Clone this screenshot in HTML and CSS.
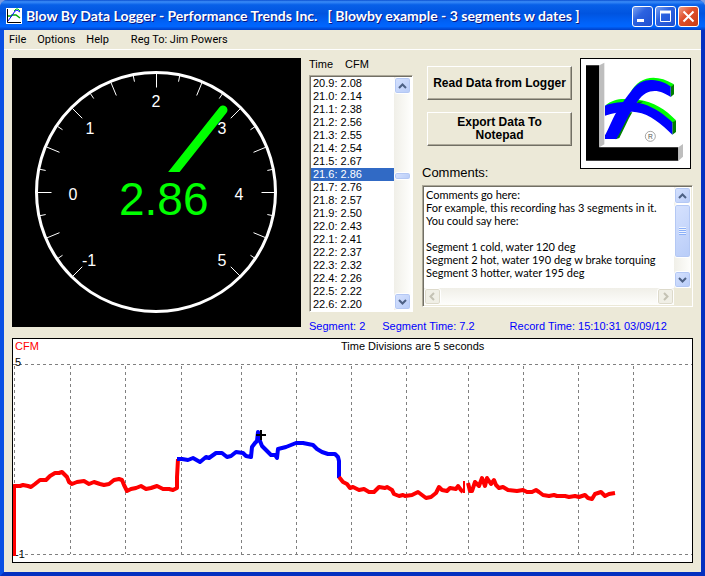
FILE: index.html
```
<!DOCTYPE html>
<html lang="en">
<head>
    <meta charset="UTF-8">
    <meta name="viewport" content="width=device-width, initial-scale=1.0">
    <title>Blow By Data Logger</title>
    <link rel="stylesheet" href="styles.css">
</head>
<body>

<div class="window">
    <header class="title-bar">
        <svg class="app-icon" viewBox="0 0 16 16" aria-hidden="true">
            <rect width="16" height="16" fill="#fff"/>
            <path d="M1.5 1V14.5H15" fill="none" stroke="#000" stroke-width="1"/>
            <path d="M2 8H5L6 7H10L14 10" fill="none" stroke="#0a0" stroke-width="1.5"/>
            <path d="M2 13L7 6L9 3L11 2L14 4" fill="none" stroke="#00f" stroke-width="1"/>
            <path d="M8 3L10 1H12L14 3" fill="none" stroke="#0c0" stroke-width="1"/>
        </svg>
        <h1>Blow By Data Logger - Performance Trends Inc. &nbsp; [ Blowby example - 3 segments w dates ]</h1>
        <div class="window-buttons">
            <button class="win-btn" aria-label="Minimize">
                <svg viewBox="0 0 19 19"><path d="M4 13.5h7" stroke="#fff" stroke-width="3"/></svg>
            </button>
            <button class="win-btn" aria-label="Maximize">
                <svg viewBox="0 0 19 19"><path d="M4.5 4.5h10v10h-10z" fill="none" stroke="#fff"/><path d="M4 5h11" stroke="#fff" stroke-width="3"/></svg>
            </button>
            <button class="win-btn close" aria-label="Close">
                <svg viewBox="0 0 19 19"><path d="M4.5 4.5l10 10M14.5 4.5l-10 10" stroke="#fff" stroke-width="2"/></svg>
            </button>
        </div>
    </header>

    <nav class="menu-bar">
        <a href="#">File</a>
        <a href="#">Options</a>
        <a href="#">Help</a>
        <a href="#" class="reg">Reg To: Jim Powers</a>
    </nav>

    <main>
        <div class="top">
            <!-- Gauge -->
            <svg class="gauge" viewBox="0 0 289 269">
                <rect width="289" height="269" fill="#000"/>
                <circle cx="144" cy="134" r="119.5" fill="none" stroke="#fff" stroke-width="3"/>
                <g id="ticks" stroke="#fff"></g>
                <line x1="146" y1="134" x2="211" y2="52" stroke="#0f0" stroke-width="9" stroke-linecap="round"/>
                <rect x="100" y="114" width="100" height="50" fill="#000"/>
                <text class="readout" x="107" y="157">2.86</text>
                <g class="gauge-labels">
                    <text x="77" y="208">-1</text>
                    <text x="61" y="142">0</text>
                    <text x="78" y="76">1</text>
                    <text x="144" y="49">2</text>
                    <text x="210" y="76">3</text>
                    <text x="227" y="142">4</text>
                    <text x="210" y="208">5</text>
                </g>
            </svg>

            <div class="side">
                <div class="panels">
                    <div class="data-list">
                        <label for="readings"><span>Time</span><span>CFM</span></label>
                        <div class="list-box">
                            <select id="readings" size="18">
                                <option>20.9: 2.08</option>
                                <option>21.0: 2.14</option>
                                <option>21.1: 2.38</option>
                                <option>21.2: 2.56</option>
                                <option>21.3: 2.55</option>
                                <option>21.4: 2.54</option>
                                <option>21.5: 2.67</option>
                                <option selected>21.6: 2.86</option>
                                <option>21.7: 2.76</option>
                                <option>21.8: 2.57</option>
                                <option>21.9: 2.50</option>
                                <option>22.0: 2.43</option>
                                <option>22.1: 2.41</option>
                                <option>22.2: 2.37</option>
                                <option>22.3: 2.32</option>
                                <option>22.4: 2.26</option>
                                <option>22.5: 2.22</option>
                                <option>22.6: 2.20</option>
                            </select>
                            <div class="scrollbar">
                                <button class="arrow" aria-label="Scroll up"><svg viewBox="0 0 9 6"><path d="M1 5l3.5-3.5L8 5"/></svg></button>
                                <div class="track before"></div>
                                <div class="thumb small"></div>
                                <div class="track after"></div>
                                <button class="arrow" aria-label="Scroll down"><svg viewBox="0 0 9 6"><path d="M1 1l3.5 3.5L8 1"/></svg></button>
                            </div>
                        </div>
                    </div>

                    <div class="right">
                        <div class="actions-row">
                            <div class="actions">
                                <button class="action">Read Data from Logger</button>
                                <button class="action">Export Data To Notepad</button>
                                <label for="comments">Comments:</label>
                            </div>
                            <svg class="logo" viewBox="18 12 327 327" role="img" aria-label="Performance Trends">
                                <path fill="#000" d="M33 31H73V277H310V317H33Z"/>
                                <path fill="#bebebe" d="M73 31L88 23V268L73 277ZM310 277L324 267V305L310 317Z"/>
                                <path fill="#0f0" d="M165 114C192 65 240 54 297 88L287 97L240 78L180 100ZM90 152C112 134 138 130 158 133L190 134C235 140 272 163 303 196L292 204L200 150L130 148Z"/>
                                <path fill="#008000" d="M287 95L297 88V118L287 126ZM292 202L303 196V231L292 239ZM187 140L205 139L190 150ZM146 172L172 172C158 195 146 225 133 249L122 253Z"/>
                                <path fill="#00f" d="M90 152C118 138 175 138 205 147C240 158 270 180 292 202V239C262 210 225 177 185 172C150 168 120 173 90 182Z"/>
                                <path fill="#00f" d="M90 241C105 214 115 185 128 165C142 143 158 120 172 104C192 78 216 72 240 76C262 79 275 86 287 95V126C258 107 220 93 187 140C160 175 145 218 124 252H90Z"/>
                                <circle cx="226" cy="244" r="15" fill="none" stroke="#777" stroke-width="2"/>
                                <text x="226" y="251" text-anchor="middle" font-size="20" fill="#555">R</text>
                            </svg>
                        </div>
                        <div class="comment-box">
                            <textarea id="comments" wrap="off">Comments go here:
For example, this recording has 3 segments in it.
You could say here:

Segment 1 cold, water 120 deg
Segment 2 hot, water 190 deg w brake torquing
Segment 3 hotter, water 195 deg</textarea>
                            <div class="scrollbar">
                                <button class="arrow" aria-label="Scroll up"><svg viewBox="0 0 9 6"><path d="M1 5l3.5-3.5L8 5"/></svg></button>
                                <div class="thumb large"><i></i></div>
                                <div class="track"></div>
                                <button class="arrow" aria-label="Scroll down"><svg viewBox="0 0 9 6"><path d="M1 1l3.5 3.5L8 1"/></svg></button>
                            </div>
                            <div class="scrollbar horizontal">
                                <button class="arrow" disabled aria-label="Scroll left"><svg viewBox="0 0 9 9"><path d="M6 1L2.5 4.5L6 8"/></svg></button>
                                <div class="track"></div>
                                <button class="arrow" disabled aria-label="Scroll right"><svg viewBox="0 0 9 9"><path d="M3 1l3.5 3.5L3 8"/></svg></button>
                            </div>
                        </div>
                    </div>
                </div>

                <div class="status">
                    <span>Segment: 2</span>
                    <span>Segment Time: 7.2</span>
                    <span>Record Time: 15:10:31 03/09/12</span>
                </div>
            </div>
        </div>

        <!-- Chart -->
        <svg class="chart" viewBox="0 0 679 223">
            <g id="grid" stroke="#808080" stroke-dasharray="3 3"></g>
            <text x="2" y="11" fill="#f00">CFM</text>
            <text x="328" y="11">Time Divisions are 5 seconds</text>
            <text x="2" y="27">5</text>
            <text x="2" y="219">-1</text>
            <g fill="none" stroke-width="4" stroke-linejoin="round">
                <polyline stroke="#f00" points="1,217 1,147 7,147 10,146 15,147 18,148 22,145 27,141 33,141 37,137 42,134 46,134 49,133 52,136 54,138 56,143 59,145 64,143 71,142 76,145 81,143 87,145 91,146 96,145 101,141 106,140 109,141 111,146 114,152 118,150 123,149 128,147 133,150 138,149 144,147 150,150 156,150 160,151 164,149 164,138 165,120"/>
                <polyline stroke="#00f" points="164,120 169,120 175,121 180,119 187,123 193,118 196,119 203,114 209,114 214,118 218,117 223,113 230,114 233,117 238,118 239,108 242,104 244,102 245,93 247,102 249,107 254,112 258,116 262,116 264,119 265,110 273,108 283,104 290,104 300,106 304,110 309,113 315,115 322,115 325,118 326,122 326,139"/>
                <polyline stroke="#f00" points="326,138 330,143 334,145 337,149 340,148 346,151 351,150 356,153 361,153 366,148 372,149 374,148 379,151 381,155 386,157 390,156 392,157 399,156 405,153 413,159 418,158 423,154 426,148 429,151 434,152 437,149 443,150 445,147 448,151 450,153"/>
                <path stroke="#f00" stroke-width="2" d="M451 142V154"/>
                <polyline stroke="#f00" points="455,144 457,152 459,152 462,143 466,147 469,139 472,147 474,139 478,145 481,141 483,146 486,149 490,148 495,151 504,152 510,151 514,153 519,153 523,151 526,153 530,156 536,157 541,156 544,157 552,157 556,158 562,157 566,158 572,156 575,159 579,160 582,155 588,153 592,157 596,155 602,154"/>
                <path stroke="#000" stroke-width="2" d="M243 96H253M248 91V101"/>
            </g>
        </svg>
    </main>
</div>

<script>
    const SVG_NS = 'http://www.w3.org/2000/svg';

    function addLine(group, x1, y1, x2, y2) {
        const line = document.createElementNS(SVG_NS, 'line');
        line.setAttribute('x1', x1);
        line.setAttribute('y1', y1);
        line.setAttribute('x2', x2);
        line.setAttribute('y2', y2);
        group.appendChild(line);
    }

    // Gauge ticks: -1 to 5 in quarter steps, 45 degrees per unit
    const ticks = document.getElementById('ticks');
    for (let i = -4; i <= 20; i++) {
        const angle = Math.PI - i * Math.PI / 16;
        const inner = i % 2 === 0 ? 105 : 113;
        const cos = Math.cos(angle);
        const sin = Math.sin(angle);
        addLine(ticks, 144.5 + inner * cos, 134.5 - inner * sin, 144.5 + 119 * cos, 134.5 - 119 * sin);
    }

    // Chart grid
    const grid = document.getElementById('grid');
    [1, 57, 112, 168, 228, 283, 338, 393, 455, 510, 565, 620].forEach(x => {
        addLine(grid, x + 0.5, 27, x + 0.5, 215);
    });
    addLine(grid, 0, 25.5, 679, 25.5);
    addLine(grid, 0, 215.5, 679, 215.5);
</script>

</body>
</html>
```
FILE: styles.css
```
* {
    box-sizing: border-box;
    margin: 0;
    padding: 0;
}

body {
    font-family: "Liberation Sans", Arial, sans-serif;
    font-size: 11px;
    line-height: 13px;
    color: #000;
    background-color: #7b9be0;
}

button, select, textarea {
    font: inherit;
    color: inherit;
}

.window {
    min-height: 100vh;
    background-color: #ece9d8;
    border: 4px solid #0842d8;
    border-top: none;
    border-left-color: #0a50e4;
    border-right-color: #0430c0;
    border-bottom-color: #0430c0;
    border-radius: 8px 8px 0 0;
}

/* Title bar */
.title-bar {
    display: flex;
    align-items: center;
    gap: 4px;
    height: 30px;
    margin: 0 -4px;
    padding: 2px 6px 0;
    border-radius: 7px 7px 0 0;
    background: linear-gradient(#0a4fd0 0, #3a8cf8 6%, #0860e8 16%, #0054e0 45%, #0062f8 75%, #0066ff 88%, #0040c8 100%);
}

.app-icon {
    width: 16px;
    height: 16px;
    flex: none;
}

.title-bar h1 {
    flex: 1;
    font-family: Lato, sans-serif;
    font-size: 14px;
    font-weight: bold;
    line-height: 20px;
    color: #fff;
    text-shadow: 1px 1px 0 #0a1883;
    white-space: nowrap;
}

.window-buttons {
    display: flex;
    gap: 2px;
}

.win-btn {
    width: 21px;
    height: 21px;
    border: 1px solid #fff;
    border-radius: 3px;
    background: linear-gradient(135deg, #7ba2f0, #2c62e0 40%, #1e50d0);
}

.win-btn svg {
    display: block;
    width: 19px;
    height: 19px;
}

.win-btn.close {
    background: linear-gradient(135deg, #f0a088, #e0502c 40%, #c83c14);
}

/* Menu */
.menu-bar {
    display: flex;
    gap: 11px;
    height: 20px;
    padding: 3px 5px;
    border-bottom: 1px solid #fff;
    font-family: Roboto, sans-serif;
}

.menu-bar a {
    color: #000;
    text-decoration: none;
}

.menu-bar .reg {
    margin-left: 11px;
}

main {
    padding: 8px;
}

.top {
    display: flex;
    align-items: flex-start;
    gap: 8px;
    margin-bottom: 4px;
}

.gauge {
    display: block;
    flex: 289;
    min-width: 0;
}

.readout {
    font-size: 46px;
    fill: #0f0;
}

.gauge-labels {
    font-size: 16px;
    fill: #fff;
    text-anchor: middle;
}

.side {
    flex: 384;
    min-width: 0;
}

.panels {
    display: flex;
    gap: 9px;
}

/* Readings list */
.data-list {
    width: 104px;
    flex: none;
}

.data-list label {
    display: flex;
    gap: 12px;
    height: 17px;
}

.list-box, .comment-box {
    border: 1px solid;
    border-color: #aca899 #fff #fff #aca899;
    background-color: #fff;
    box-shadow: inset 1px 1px 0 #716f64;
}

.list-box {
    display: flex;
    height: 237px;
    padding: 1px;
}

select {
    flex: 1;
    min-width: 0;
    height: 234px;
    border: none;
    outline: none;
    background-color: #fff;
    overflow: hidden;
    scrollbar-width: none;
}

option {
    height: 13px;
    min-height: 13px;
    padding: 0 2px;
    line-height: 13px;
}

option:checked {
    color: #fff;
    background: #316ac5 linear-gradient(#316ac5, #316ac5);
}

/* Scrollbars */
.scrollbar {
    display: flex;
    flex-direction: column;
    width: 17px;
    flex: none;
    background: linear-gradient(90deg, #f0efe8, #fefefc);
}

.scrollbar.horizontal {
    flex-direction: row;
    width: auto;
    height: 17px;
    background: linear-gradient(#f0efe8, #fefefc);
}

.arrow, .thumb {
    flex: none;
    width: 17px;
    height: 17px;
    border: 1px solid #fff;
    border-radius: 3px;
    background: linear-gradient(135deg, #d6e2fe, #b8ccf8);
    box-shadow: inset 0 0 0 1px #b4c8f4;
}

.arrow svg {
    display: block;
    width: 9px;
    margin: auto;
    fill: none;
    stroke: #4d6185;
    stroke-width: 2;
}

.arrow:disabled {
    background: #f0efe6;
    box-shadow: inset 0 0 0 1px #dddacb;
}

.arrow:disabled svg {
    stroke: #c4c2b4;
}

.track {
    flex: 1;
}

.track.before {
    flex: 79;
}

.track.after {
    flex: 115;
}

.thumb.small {
    height: 8px;
}

.thumb.large {
    height: 54px;
    display: flex;
    align-items: center;
    justify-content: center;
}

.thumb i {
    width: 7px;
    height: 8px;
    background: repeating-linear-gradient(#eef4fe 0 1px, #8cb0f8 1px 2px);
}

/* Buttons, logo, comments */
.right {
    flex: 1;
    min-width: 0;
}

.actions-row {
    display: flex;
    gap: 8px;
    height: 127px;
    padding-right: 2px;
}

.actions {
    flex: 1;
    display: flex;
    flex-direction: column;
    gap: 12px;
    padding-top: 8px;
}

.action {
    height: 34px;
    margin-left: 5px;
    padding: 0 24px;
    border: 1px solid;
    border-color: #fff #716f64 #716f64 #fff;
    background-color: #ece9d8;
    box-shadow: inset -1px -1px 0 #aca899;
    font-weight: bold;
    font-size: 12px;
}

.action:first-child {
    padding: 0;
}

.actions label {
    margin-top: 8px;
    font-size: 13px;
}

.logo {
    flex: none;
    width: 111px;
    height: 111px;
    border: 1px solid #000;
    background-color: #fff;
}

.comment-box {
    display: grid;
    grid-template-columns: 1fr 17px;
    grid-template-rows: 1fr 17px;
    height: 122px;
    padding: 1px;
    background-color: #ece9d8;
}

textarea {
    display: block;
    width: 100%;
    height: 100%;
    padding: 1px 2px;
    border: none;
    outline: none;
    resize: none;
    overflow: hidden;
    background-color: #fff;
    font-family: Lato, sans-serif;
}

.status {
    display: flex;
    margin-top: 8px;
    color: #00f;
    white-space: nowrap;
}

.status span:nth-child(2) {
    margin-left: 17px;
}

.status span:nth-child(3) {
    margin-left: 35px;
}

.chart {
    display: block;
    width: 100%;
    margin-top: 5px;
    border: 1px solid #000;
    background-color: #fff;
    font-size: 11px;
}
```
